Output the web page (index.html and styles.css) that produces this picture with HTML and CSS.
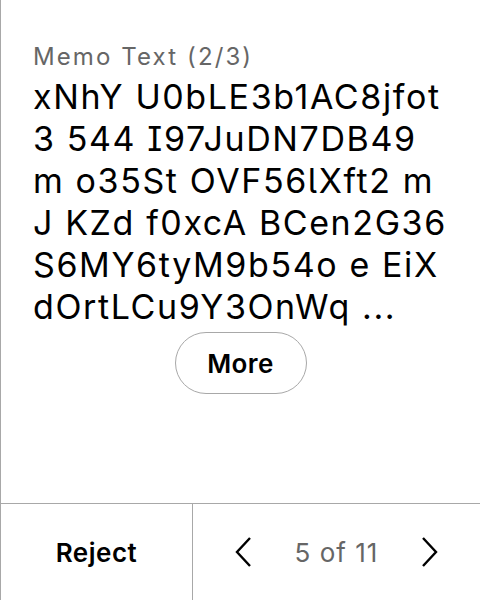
FILE: index.html
```html
<!DOCTYPE html>
<html>
<head>
<meta charset="utf-8">
<link rel="stylesheet" href="styles.css">
</head>
<body>
<div class="screen">
  <main class="content">
    <div class="label">Memo Text (2/3)</div>
    <div class="memo">xNhY U0bLE3b1AC8jfot 3 544 I97JuDN7DB49 m o35St OVF56lXft2 m J KZd f0xcA BCen2G36 S6MY6tyM9b54o e EiX dOrtLCu9Y3OnWq ...</div>
    <div class="more-row"><button class="more">More</button></div>
  </main>
  <footer class="bar">
    <div class="reject">Reject</div>
    <div class="pager">
      <svg class="chev" width="18" height="32" viewBox="0 0 18 32"><path d="M16 2 L3 16 L16 30" fill="none" stroke="#000" stroke-width="2.4"/></svg>
      <span class="count">5 of 11</span>
      <svg class="chev" width="18" height="32" viewBox="0 0 18 32"><path d="M2 2 L15 16 L2 30" fill="none" stroke="#000" stroke-width="2.4"/></svg>
    </div>
  </footer>
</div>
</body>
</html>
```
FILE: styles.css
```css
html, body { margin: 0; padding: 0; background: #fff; }
body {
  font-family: Inter, "Noto Sans", sans-serif;
  font-feature-settings: "cv05", "cv08";
}
.screen {
  width: 480px;
  height: 600px;
  box-sizing: border-box;
  border-left: 1px solid #a8a8a8;
  display: flex;
  flex-direction: column;
}
.content {
  flex: 1;
  padding: 42px 0 0 32px;
}
.label {
  font-size: 24px;
  letter-spacing: 2.1px;
  color: #666;
  line-height: 30px;
}
.memo {
  margin-top: 4px;
  font-size: 34px;
  letter-spacing: 1.6px;
  line-height: 42px;
  color: #000;
  width: 418px;
}
.more-row {
  display: flex;
  justify-content: center;
  margin-top: 4px;
  width: 415px;
}
.more {
  width: 132px;
  height: 62px;
  border: 1.5px solid #a8a8a8;
  border-radius: 31px;
  background: #fff;
  font-family: inherit;
  font-feature-settings: inherit;
  font-size: 26px;
  letter-spacing: 0.4px;
  font-weight: 600;
  color: #000;
}
.bar {
  height: 96px;
  border-top: 1px solid #a8a8a8;
  display: flex;
}
.reject {
  width: 191px;
  border-right: 1px solid #a8a8a8;
  display: flex;
  align-items: center;
  justify-content: center;
  font-size: 26px;
  letter-spacing: 0.5px;
  font-weight: 600;
}
.pager {
  flex: 1;
  display: flex;
  align-items: center;
  justify-content: center;
  gap: 43px;
}
.count {
  font-size: 26px;
  letter-spacing: 1px;
  color: #666;
}
.chev { display: block; }
```
